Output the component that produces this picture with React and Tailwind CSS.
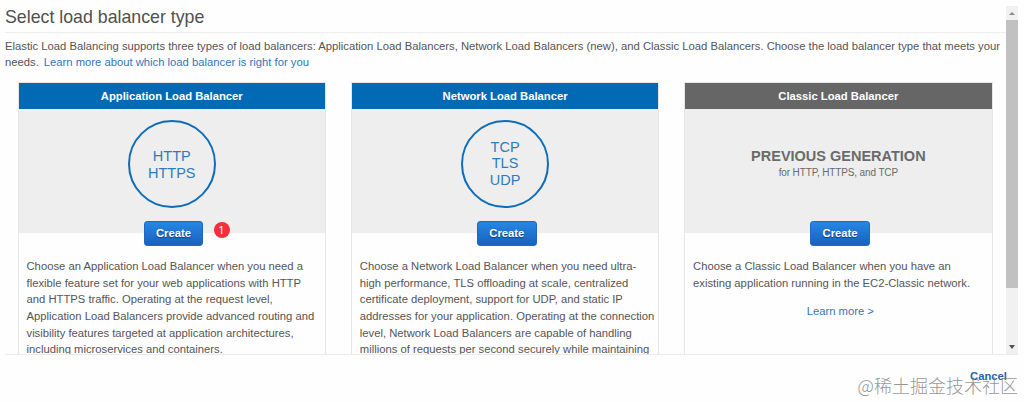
const balancers = [
  {
    name: "Application Load Balancer",
    headerClass: "bg-[#0269b5]",
    protocols: ["HTTP", "HTTPS"],
    circleClass: "pt-px",
    step: 1,
    lines: [
      "Choose an Application Load Balancer when you need a",
      "flexible feature set for your web applications with HTTP",
      "and HTTPS traffic. Operating at the request level,",
      "Application Load Balancers provide advanced routing and",
      "visibility features targeted at application architectures,",
      "including microservices and containers.",
    ],
  },
  {
    name: "Network Load Balancer",
    headerClass: "bg-[#0269b5]",
    protocols: ["TCP", "TLS", "UDP"],
    circleClass: "pb-px",
    lines: [
      "Choose a Network Load Balancer when you need ultra-",
      "high performance, TLS offloading at scale, centralized",
      "certificate deployment, support for UDP, and static IP",
      "addresses for your application. Operating at the connection",
      "level, Network Load Balancers are capable of handling",
      "millions of requests per second securely while maintaining",
    ],
  },
  {
    name: "Classic Load Balancer",
    headerClass: "bg-[#666666]",
    lines: [
      "Choose a Classic Load Balancer when you have an",
      "existing application running in the EC2-Classic network.",
    ],
    learnMore: true,
  },
]

export default function App() {
  return (
    <div className="h-[402px] w-[1024px] overflow-hidden bg-[#fefefe] pl-[5px] pt-[6px] font-['Liberation_Sans',Arial,sans-serif] text-[11.26px] leading-[16.67px] text-[#555555]">
      <div className="flex h-[349px] w-[1013px] border-b border-[#ebebeb]">
        <main className="h-[348px] w-[1001px] overflow-hidden">
          <h1 className="h-[27px] border-b border-[#eeeeee] text-[17.75px] leading-[23px] text-[#505050]">
            Select load balancer type
          </h1>
          <div className="whitespace-nowrap pt-[4.5px]">
            <p>
              Elastic Load Balancing supports three types of load balancers: Application Load Balancers, Network Load
              Balancers (new), and Classic Load Balancers. Choose the load balancer type that meets your
            </p>
            <p>
              needs.
              <a className="ml-[5px] text-[#3376b8]">Learn more about which load balancer is right for you</a>
            </p>
          </div>
          <div className="ml-[12.5px] mt-[11px] flex gap-[24.8px]">
            {balancers.map((b) => (
              <BalancerCard key={b.name} balancer={b} />
            ))}
          </div>
        </main>
        <Scrollbar />
      </div>

      <footer className="relative flex h-[47px] justify-end pr-[17px] pt-[12.5px]">
        <a className="font-bold text-[#1f66b0]">Cancel</a>
        <span className="absolute right-[6px] top-[17px] whitespace-nowrap font-['Noto_Sans_CJK_SC',sans-serif] text-[18px] font-light leading-[26px] text-[#777777]/80">
          @稀土掘金技术社区
        </span>
      </footer>
    </div>
  )
}

function BalancerCard({ balancer }) {
  const { name, headerClass, protocols, circleClass, step, lines, learnMore } = balancer
  return (
    <section className="h-[400px] w-[308.5px] shrink-0 border border-[#e6e6e6]">
      <h2 className={`h-[26px] text-center font-bold leading-[26px] text-white ${headerClass}`}>{name}</h2>
      <div className="flex h-[124px] flex-col items-center bg-[#eeeeee] pt-[11px]">
        {protocols ? (
          <div
            className={`flex size-[88.5px] flex-col items-center justify-center rounded-full border-2 border-[#0f6db7] text-[14.5px] leading-[16.67px] text-[#2f7cba] ${circleClass}`}
          >
            {protocols.map((p) => (
              <span key={p}>{p}</span>
            ))}
          </div>
        ) : (
          <div className="pt-[27px] text-center text-[#6a6a6a]">
            <p className="text-[14.5px] font-bold leading-[18px]">PREVIOUS GENERATION</p>
            <p className="text-[10px] leading-[16px] tracking-[-0.13px]">for HTTP, HTTPS, and TCP</p>
          </div>
        )}
      </div>
      <div className="relative -mt-[12px] ml-[3.5px] flex justify-center">
        <button className="h-[25px] w-[59.5px] rounded-[3px] border border-[#2069bd] bg-linear-to-b from-[#2786e4] to-[#1763bd] font-bold leading-[23px] text-white [text-shadow:0_1px_1px_#0a3c78]">
          Create
        </button>
        {step && (
          <span className="absolute left-[191.5px] top-[1px] size-4 rounded-full bg-[#f6303b] text-center font-['Noto_Sans',sans-serif] text-[11px] leading-4 text-white">
            {step}
          </span>
        )}
      </div>
      <div className="whitespace-nowrap pl-[8px] pt-[12px]">
        {lines.map((line) => (
          <p key={line}>{line}</p>
        ))}
      </div>
      {learnMore && (
        <p className="ml-[4px] mt-[12px] text-center">
          <a className="text-[#3376b8]">Learn more &gt;</a>
        </p>
      )}
    </section>
  )
}

function Scrollbar() {
  return (
    <div className="flex w-[12px] flex-col bg-[#f1f1f1]">
      <div className="flex h-[14px] items-center justify-center">
        <svg className="h-[3px] w-[6px]" viewBox="0 0 6 3">
          <path d="M0 3L3 0L6 3Z" fill="#8a8a8a" />
        </svg>
      </div>
      <div className="h-[268px] bg-[#c1c1c1]" />
      <div className="mt-auto flex h-[14px] items-center justify-center">
        <svg className="h-[4px] w-[6px]" viewBox="0 0 6 4">
          <path d="M0 0L3 4L6 0Z" fill="#505050" />
        </svg>
      </div>
    </div>
  )
}
